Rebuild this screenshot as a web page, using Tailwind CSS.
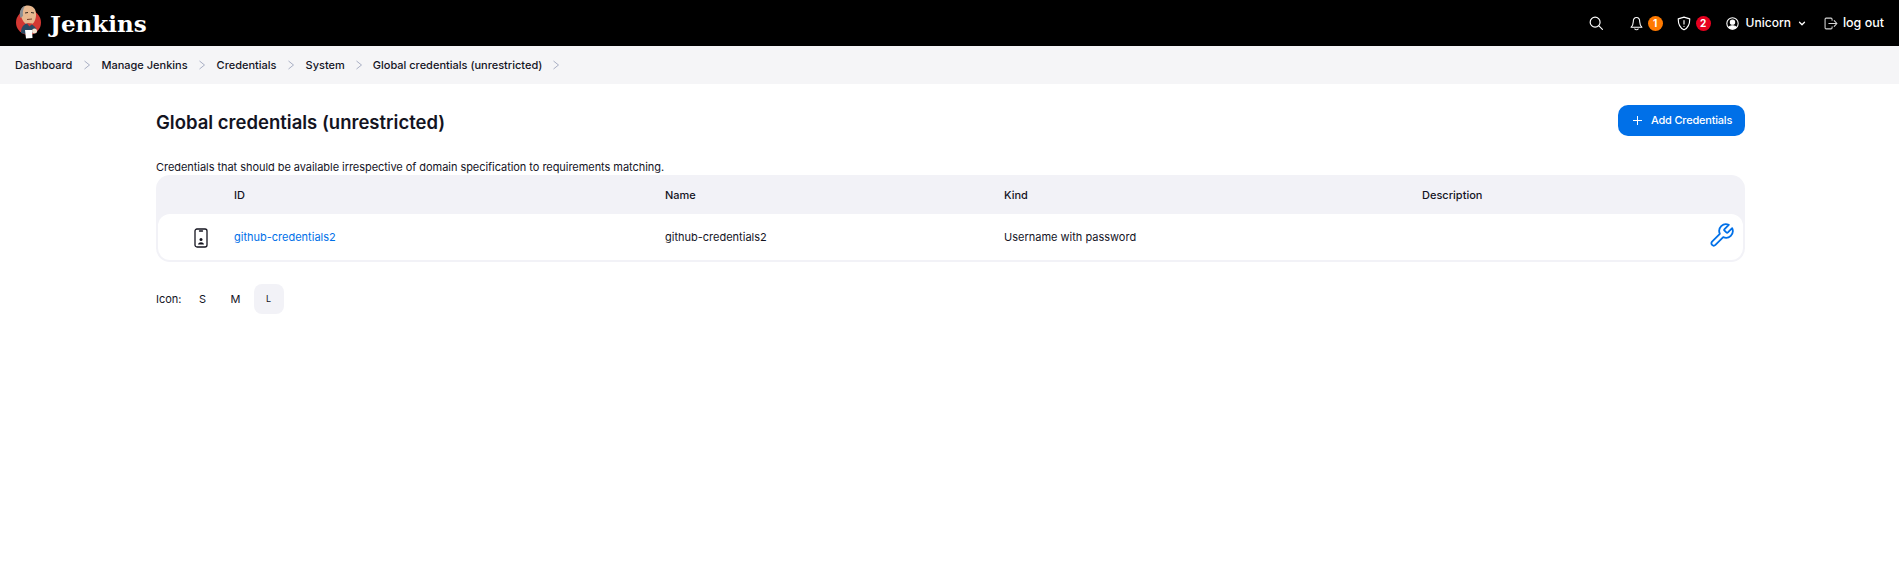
<!DOCTYPE html>
<html lang="en">
<head>
  <meta charset="UTF-8">
  <title>Global credentials (unrestricted) - Jenkins</title>
  <script src="https://cdn.jsdelivr.net/npm/@tailwindcss/browser@4"></script>
</head>
<body class="bg-white font-['Inter',sans-serif] text-[11px] text-[#14141f]">
  <!-- Header -->
  <header class="h-[46px] bg-black text-white flex items-center justify-between pl-[14px] pr-[15px]">
    <a class="flex items-center gap-[8px]">
      <svg class="w-[28px] h-[36px]" viewBox="0 0 28 36">
        <circle cx="14.5" cy="17.5" r="12.5" fill="#d33833"/>
        <path d="M6.5 9 C6 3 10 0.5 14 0.5 C19 0.5 22.5 4 22 11 C21.5 16 19 20 15 20 C11 20 7.5 15 6.5 9Z" fill="#e8b88f"/>
        <path d="M6.5 13 C4.5 7 7 2 11 1 C9 4 8.5 7 9 11Z" fill="#8a8f94"/>
        <path d="M11 8 L14 7.5 M17 7.5 L20 8" stroke="#3a2a20" stroke-width="1"/>
        <path d="M13 14.5 L18 14" stroke="#7a3d2a" stroke-width="1"/>
        <path d="M7 28 C7 23 9 20 12 18.5 L18 19.5 C21 21 23 24 23 27 L11 29Z" fill="#2b4a63"/>
        <path d="M12.5 18 L18.5 18.5 L15.5 21.5Z" fill="#d33833"/>
        <path d="M11 25 L18 25 L18.5 33 L12 33.5Z" fill="#fff"/>
        <circle cx="20.5" cy="26" r="2.5" fill="#f3e0cc"/>
      </svg>
      <span class="font-['DejaVu_Serif',serif] font-bold text-[23px] leading-none">Jenkins</span>
    </a>
    <nav class="flex items-center text-[12px] font-medium">
      <svg class="w-[14px] h-[14px] mr-[27px]" viewBox="0 0 24 24" fill="none" stroke="currentColor" stroke-width="2" stroke-linecap="round"><circle cx="10.5" cy="10.5" r="8.5"/><path d="M17 17 L23 23"/></svg>
      <svg class="w-[13px] h-[15px] mr-[5px]" viewBox="0 0 24 26" fill="none" stroke="currentColor" stroke-width="2" stroke-linecap="round" stroke-linejoin="round"><path d="M12 2 C7.5 2 6 6 6 10 C6 15 4.5 17 2 20 L22 20 C19.5 17 18 15 18 10 C18 6 16.5 2 12 2Z"/><path d="M9 23 C10 25 14 25 15 23"/></svg>
      <span class="w-[15px] h-[15px] rounded-full bg-[#ff7a00] text-[10px] font-bold flex items-center justify-center mr-[14px]">1</span>
      <svg class="w-[14px] h-[15px] mr-[5px]" viewBox="0 0 24 26" fill="none" stroke="currentColor" stroke-width="2" stroke-linecap="round" stroke-linejoin="round"><path d="M12 2 L22 5 C22 14 20 20 12 24 C4 20 2 14 2 5Z"/><path d="M12 8 L12 14 M12 18 L12 18.2"/></svg>
      <span class="w-[15px] h-[15px] rounded-full bg-[#e6001f] text-[10px] font-bold flex items-center justify-center mr-[15px]">2</span>
      <svg class="w-[13px] h-[13px] mr-[7px]" viewBox="0 0 24 24" fill="none" stroke="currentColor" stroke-width="2"><circle cx="12" cy="12" r="10.5"/><circle cx="12" cy="9.5" r="4" fill="currentColor"/><path d="M5 19 C7 15 17 15 19 19 C16 23 8 23 5 19Z" fill="currentColor"/></svg>
      <span class="mr-[7px]">Unicorn</span>
      <svg class="w-[8px] h-[5px] mr-[18px]" viewBox="0 0 12 8" fill="none" stroke="currentColor" stroke-width="2" stroke-linecap="round" stroke-linejoin="round"><path d="M2 2 L6 6 L10 2"/></svg>
      <svg class="w-[14px] h-[13px] mr-[5px]" viewBox="0 0 26 24" fill="none" stroke="#d4d4d4" stroke-width="2" stroke-linecap="round" stroke-linejoin="round"><path d="M15 6 V4 C15 2.5 14 2 13 2 H4 C3 2 2 3 2 4 V20 C2 21 3 22 4 22 H13 C14 22 15 21.5 15 20 V18"/><path d="M9 12 H24 M19 6.5 L24 12 L19 17.5"/></svg>
      <span class="text-[12.5px]">log out</span>
    </nav>
  </header>

  <!-- Breadcrumbs -->
  <div class="h-[38px] bg-[#f5f5f7] flex items-center pl-[15px] text-[11px] font-medium">
    <span>Dashboard</span>
    <svg class="w-[6px] h-[10px] mx-[11.5px]" viewBox="0 0 6 10" fill="none" stroke="#a9afc4" stroke-width="1"><path d="M0.5 1 L5.5 5 L0.5 9"/></svg>
    <span>Manage Jenkins</span>
    <svg class="w-[6px] h-[10px] mx-[11.5px]" viewBox="0 0 6 10" fill="none" stroke="#a9afc4" stroke-width="1"><path d="M0.5 1 L5.5 5 L0.5 9"/></svg>
    <span>Credentials</span>
    <svg class="w-[6px] h-[10px] mx-[11.5px]" viewBox="0 0 6 10" fill="none" stroke="#a9afc4" stroke-width="1"><path d="M0.5 1 L5.5 5 L0.5 9"/></svg>
    <span>System</span>
    <svg class="w-[6px] h-[10px] mx-[11px]" viewBox="0 0 6 10" fill="none" stroke="#a9afc4" stroke-width="1"><path d="M0.5 1 L5.5 5 L0.5 9"/></svg>
    <span>Global credentials (unrestricted)</span>
    <svg class="w-[6px] h-[10px] mx-[11px]" viewBox="0 0 6 10" fill="none" stroke="#a9afc4" stroke-width="1"><path d="M0.5 1 L5.5 5 L0.5 9"/></svg>
  </div>

  <main class="ml-[156px] w-[1589px]">
    <div class="flex items-start justify-between pt-[21px] h-[52px]">
      <h1 class="text-[18.5px] font-semibold leading-[24px] mt-[5px]">Global credentials (unrestricted)</h1>
      <a class="w-[127px] h-[31px] rounded-[10px] bg-[#0070e8] text-white text-[11px] font-medium tracking-[-0.2px] flex items-center pl-[15px] gap-[9px]">
        <svg class="w-[9px] h-[9px]" viewBox="0 0 9 9" fill="none" stroke="currentColor" stroke-width="1"><path d="M4.5 0 V9 M0 4.5 H9"/></svg>
        Add Credentials
      </a>
    </div>
    <p class="mt-[22px] h-[17px] leading-[17px] pt-[1px] tracking-[-0.05px]">Credentials that should be available irrespective of domain specification to requirements matching.</p>

    <!-- Credentials table -->
    <div class="rounded-[14px] bg-[#f2f2f7] pb-[2px] px-[2px]">
      <div class="h-[39px] flex items-center font-medium pt-[1px]">
        <div class="w-[76px]"></div>
        <div class="w-[431px]">ID</div>
        <div class="w-[339px]">Name</div>
        <div class="w-[418px]">Kind</div>
        <div>Description</div>
      </div>
      <div class="h-[46px] rounded-[12px] bg-white flex items-center pt-[1px]">
        <div class="w-[76px] pl-[36px]">
          <svg class="w-[14px] h-[20px]" viewBox="0 0 14 20" fill="none" stroke="#14141f" stroke-width="1.3"><rect x="1" y="1" width="12" height="18" rx="2"/><path d="M5.5 3 H8.5" stroke-linecap="round"/><circle cx="7" cy="11.5" r="1.5" fill="#14141f" stroke="none"/><path d="M4 16.5 C4.5 13.5 9.5 13.5 10 16.5Z" fill="#14141f" stroke="none"/></svg>
        </div>
        <a class="w-[431px] text-[#0070e8]">github-credentials2</a>
        <div class="w-[339px]">github-credentials2</div>
        <div class="w-[418px]">Username with password</div>
        <div class="flex-1 flex justify-end pr-[8px] pb-[4px]">
          <svg class="w-[27px] h-[27px]" viewBox="0 0 24 24" fill="none" stroke="#0070e8" stroke-width="1.6" stroke-linecap="round" stroke-linejoin="round"><path d="M14.7 6.3 a1 1 0 0 0 0 1.4 l1.6 1.6 a1 1 0 0 0 1.4 0 l3.77-3.77 a6 6 0 0 1-7.94 7.94 l-6.91 6.91 a2.12 2.12 0 0 1-3-3 l6.91-6.91 a6 6 0 0 1 7.94-7.94 l-3.76 3.76Z"/></svg>
        </div>
      </div>
    </div>

    <!-- Icon size switcher -->
    <div class="flex items-center mt-[22px]">
      <span class="mr-[6px]">Icon:</span>
      <span class="w-[30px] h-[30px] flex items-center justify-center">S</span>
      <span class="w-[30px] h-[30px] flex items-center justify-center ml-[3px]">M</span>
      <span class="w-[30px] h-[30px] flex items-center justify-center rounded-[8px] bg-[#f2f2f7] text-[9px] ml-[3px]">L</span>
    </div>
  </main>
</body>
</html>
